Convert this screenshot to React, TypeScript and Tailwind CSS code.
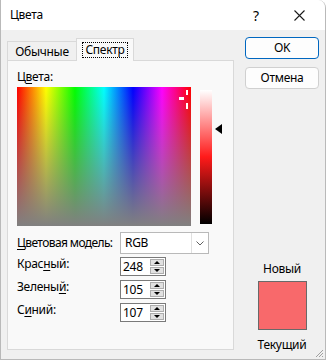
import React from "react";

function Ul({ children }: { children: React.ReactNode }) {
  return <span className="underline underline-offset-2">{children}</span>;
}

function Spin({ value }: { value: string }) {
  return (
    <div className="flex h-[19px] w-[46px] border border-[#7a7a7a] bg-white">
      <div className="flex-1 pl-[2px] leading-[18px]">{value}</div>
      <div className="my-[1px] mr-[1px] flex w-[14px] flex-col gap-[1px]">
        <div className="flex flex-1 items-center justify-center border border-[#adadad] bg-[#e1e1e1]">
          <div className="h-0 w-0 border-x-[3px] border-b-[3px] border-x-transparent border-b-black" />
        </div>
        <div className="flex flex-1 items-center justify-center border border-[#adadad] bg-[#e1e1e1]">
          <div className="h-0 w-0 border-x-[3px] border-t-[3px] border-x-transparent border-t-black" />
        </div>
      </div>
    </div>
  );
}

function Field({ label, value }: { label: React.ReactNode; value: string }) {
  return (
    <div className="flex h-[19px] items-start">
      <div className="w-[103px] whitespace-nowrap leading-[14px]">{label}</div>
      <Spin value={value} />
    </div>
  );
}

export default function App() {
  return (
    <div className="relative flex h-[360px] w-[326px] flex-col overflow-hidden rounded-tr-[8px] border-x border-b border-[#b9b9b9] bg-[#f0f0f0] text-[12px] tracking-[-0.3px] text-black [font-family:'Noto_Sans',sans-serif]">
      {/* title bar */}
      <div className="flex h-[30px] shrink-0 items-center bg-white pl-[9px]">
        <span className="flex-1">Цвета</span>
        <span className="w-[16px] text-center text-[14px]">?</span>
        <svg className="ml-[30px] mr-[20px]" width="11" height="11" viewBox="0 0 11 11">
          <path d="M0.5 0.5L10.5 10.5M10.5 0.5L0.5 10.5" stroke="#1a1a1a" strokeWidth="1.1" />
        </svg>
      </div>

      <div className="flex flex-1 gap-[11px] pl-[6px]">
        {/* tab control */}
        <div className="mt-[8px] flex w-[227px] flex-col">
          <div className="flex h-[22px] items-end">
            <div className="flex h-[19px] w-[69px] items-center justify-center border-l border-t border-[#d9d9d9] bg-[#f0f0f0] pt-[1px]">
              Обычные
            </div>
            <div className="relative z-10 -mb-px flex h-[23px] w-[58px] items-center justify-center border-x border-t border-[#d9d9d9] bg-[#f9f9f9]">
              <span className="border border-dotted border-black px-[2px] leading-[14px]">Спектр</span>
            </div>
          </div>
          <div className="flex h-[290px] flex-col border border-[#d9d9d9] bg-[#f9f9f9] pl-[9px] pt-[8px]">
            <div className="h-[16px] leading-[16px]">
              Ц<Ul>в</Ul>ета:
            </div>
            <div className="mt-[2px] flex items-start">
              <div className="relative h-[139px] w-[174px] bg-[image:linear-gradient(to_bottom,rgba(128,128,128,0),#808080),linear-gradient(to_right,#ff0000,#ffff00,#00ff00,#00ffff,#0000ff,#ff00ff,#ff0000)]">
                <div className="absolute left-[169px] top-[3px] h-[5px] w-[2px] bg-white" />
                <div className="absolute left-[169px] top-[16px] h-[6px] w-[2px] bg-white" />
                <div className="absolute left-[162px] top-[10px] h-[3px] w-[5px] bg-white" />
              </div>
              <div className="mt-[3px] ml-[9px] h-[134px] w-[12px] bg-[linear-gradient(to_bottom,#ffffff,#ff1a1a_50%,#000000)]" />
              <div className="mt-[37px] ml-[3px] h-0 w-0 border-y-[5px] border-r-[7px] border-y-transparent border-r-black" />
            </div>

            <div className="mt-[6px] flex h-[22px] items-center">
              <div className="w-[103px] whitespace-nowrap tracking-[-0.6px]">
                <Ul>Ц</Ul>ветовая модель:
              </div>
              <div className="flex h-[22px] w-[89px] items-center border border-[#b9b9b9] bg-white">
                <span className="flex-1 pl-[4px]">RGB</span>
                <div className="flex h-[20px] w-[17px] items-center justify-center border-l border-[#e0e0e0]">
                  <svg width="8" height="5" viewBox="0 0 8 5">
                    <path d="M0.5 0.5L4 4L7.5 0.5" fill="none" stroke="#606060" strokeWidth="1" />
                  </svg>
                </div>
              </div>
            </div>

            <div className="mt-[3px] flex flex-col gap-[4px]">
              <Field label={<>Крас<Ul>н</Ul>ый:</>} value="248" />
              <Field label={<>Зелены<Ul>й</Ul>:</>} value="105" />
              <Field label={<>С<Ul>и</Ul>ний:</>} value="107" />
            </div>
          </div>
        </div>

        {/* right column */}
        <div className="flex w-[74px] flex-col pt-[7px]">
          <div className="flex h-[22px] items-center justify-center rounded-[4px] border border-[#0067c0] bg-[#fdfdfd]">
            OK
          </div>
          <div className="mt-[8px] flex h-[22px] items-center justify-center rounded-[4px] border border-[#d0d0d0] bg-[#fdfdfd]">
            Отмена
          </div>
          <div className="mt-[172px] flex flex-col items-center">
            <span className="leading-[16px]">Новый</span>
            <div className="mt-[4px] h-[49px] w-[49px] border border-[#696969] bg-[#f8696b]" />
            <span className="mt-[7px] leading-[16px]">Текущий</span>
          </div>
        </div>
      </div>

      <svg className="absolute bottom-[1px] right-[1px]" width="10" height="10" viewBox="0 0 10 10">
        <path d="M9 2L2 9M9 5L5 9M9 8L8 9" stroke="#a0a0a0" strokeWidth="1" />
      </svg>
    </div>
  );
}
